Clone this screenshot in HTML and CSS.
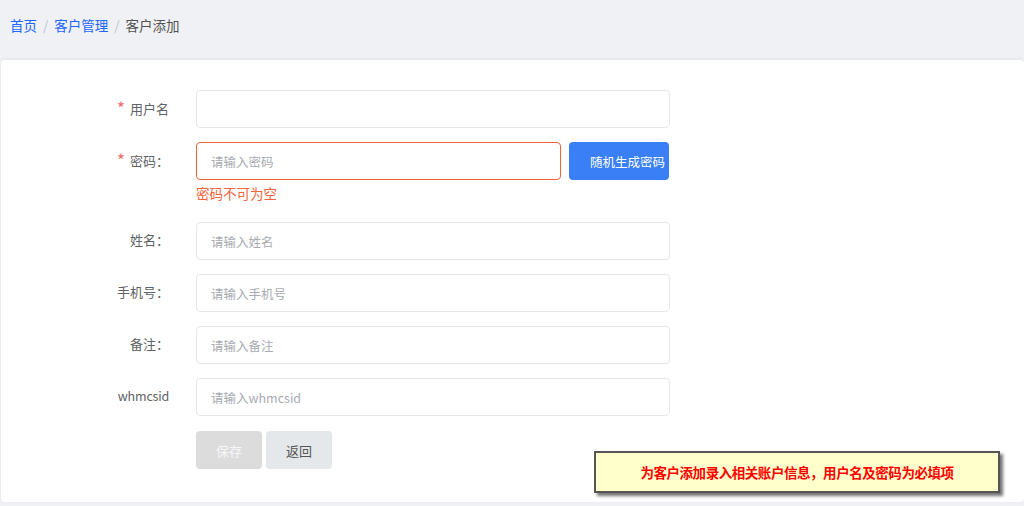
FILE: index.html
```html
<!DOCTYPE html>
<html lang="zh-CN">
<head>
    <meta charset="UTF-8">
    <title>客户添加</title>
    <link rel="stylesheet" href="styles.css">
</head>
<body>
    <div class="breadcrumb">
        <a href="#">首页</a><span class="sep">/</span><a href="#">客户管理</a><span class="sep">/</span><span class="current">客户添加</span>
    </div>
    <div class="card">
        <form class="form">
            <div class="form-item">
                <label class="label"><span class="req">*</span>用户名</label>
                <div class="control"><input class="input" type="text"></div>
            </div>
            <div class="form-item has-error">
                <label class="label"><span class="req">*</span>密码：</label>
                <div class="control">
                    <div class="row">
                        <input class="input input-error" type="text" placeholder="请输入密码">
                        <button type="button" class="btn btn-primary">随机生成密码</button>
                    </div>
                    <div class="error-msg">密码不可为空</div>
                </div>
            </div>
            <div class="form-item">
                <label class="label">姓名：</label>
                <div class="control"><input class="input" type="text" placeholder="请输入姓名"></div>
            </div>
            <div class="form-item">
                <label class="label">手机号：</label>
                <div class="control"><input class="input" type="text" placeholder="请输入手机号"></div>
            </div>
            <div class="form-item">
                <label class="label">备注：</label>
                <div class="control"><input class="input" type="text" placeholder="请输入备注"></div>
            </div>
            <div class="form-item">
                <label class="label label-latin">whmcsid</label>
                <div class="control"><input class="input" type="text" placeholder="请输入whmcsid"></div>
            </div>
            <div class="form-item">
                <label class="label"></label>
                <div class="control buttons">
                    <button type="button" class="btn btn-disabled">保存</button>
                    <button type="button" class="btn btn-back">返回</button>
                </div>
            </div>
        </form>
        <div class="tip">为客户添加录入相关账户信息，用户名及密码为必填项</div>
    </div>
</body>
</html>
```

FILE: styles.css
```css
body {
    margin: 0;
    font-family: "Noto Sans CJK SC", "Liberation Sans", sans-serif;
    background-color: #f0f1f5;
    color: #606266;
    height: 506px;
    overflow: hidden;
}
.breadcrumb {
    height: 52px;
    padding: 0 10px;
    display: flex;
    align-items: center;
    font-size: 13.5px;
    line-height: 1;
}
.breadcrumb a {
    color: #1a66ff;
    text-decoration: none;
}
.breadcrumb .sep {
    color: #c0c4cc;
    margin: 0 6px;
}
.breadcrumb .current {
    color: #515151;
}
.card {
    position: relative;
    margin: 8px 0 0 1px;
    height: 442px;
    background: #fff;
    border-radius: 4px;
    box-shadow: 0 -1px 4px rgba(0, 0, 0, 0.06);
    padding-top: 30px;
    box-sizing: border-box;
}
.form-item {
    display: flex;
    margin-bottom: 14px;
}
.label {
    width: 168px;
    flex-shrink: 0;
    text-align: right;
    font-size: 13px;
    line-height: 36px;
    padding-right: 27px;
    box-sizing: content-box;
    color: #606266;
}
.label-latin {
    font-size: 12.5px;
    letter-spacing: -0.2px;
}
.req {
    color: #f56c6c;
    font-size: 17px;
    margin-right: 5px;
    vertical-align: -1px;
}
.control {
    width: 474px;
}
.row {
    display: flex;
    gap: 8px;
    width: 474px;
}
.input {
    display: block;
    width: 474px;
    height: 38px;
    box-sizing: border-box;
    border: 1px solid #e4e6eb;
    border-radius: 4px;
    padding: 0 14px;
    font-family: inherit;
    font-size: 12.5px;
    color: #606266;
    outline: none;
}
.input::placeholder {
    color: #a8abb2;
}
.input-error {
    border-color: #f0643c;
    width: 365px;
    flex-shrink: 0;
}
.error-msg {
    color: #f0643c;
    font-size: 13.5px;
    line-height: 20px;
    margin-top: 3px;
    margin-bottom: 5px;
}
.btn {
    height: 38px;
    border: none;
    border-radius: 4px;
    font-family: inherit;
    font-size: 13px;
    cursor: pointer;
}
.btn-primary {
    width: 100px;
    flex-shrink: 0;
    background: #3a7ff5;
    color: #fff;
    font-size: 12.5px;
    padding: 0 0 0 21px;
    text-align: left;
    white-space: nowrap;
}
.buttons {
    display: flex;
    gap: 4px;
    padding-top: 1px;
}
.btn-disabled {
    width: 66px;
    background: #dcdcdc;
    color: #f7f7f7;
}
.btn-back {
    width: 66px;
    height: 38px;
    background: #e4e8eb;
    color: #555;
}
.tip {
    position: absolute;
    left: 593px;
    top: 391px;
    width: 402px;
    height: 38px;
    border: 2px solid #555;
    background: #ffffcc;
    box-shadow: 3px 3px 3px rgba(0, 0, 0, 0.55);
    color: #ff0000;
    font-family: "Noto Sans CJK SC", sans-serif;
    font-weight: bold;
    font-size: 13.5px;
    letter-spacing: -0.45px;
    display: flex;
    align-items: center;
    justify-content: center;
}
```
